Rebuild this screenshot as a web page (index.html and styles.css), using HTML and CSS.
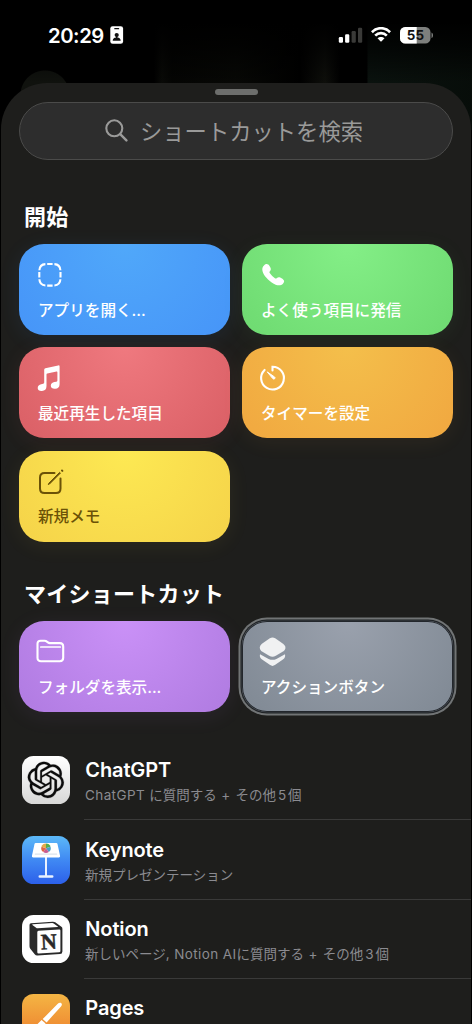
FILE: index.html
```html
<!DOCTYPE html>
<html lang="ja">
<head>
<meta charset="utf-8">
<title>ショートカット</title>
<link rel="stylesheet" href="styles.css">
</head>
<body>
<div class="screen">
  <header class="status">
    <span class="time">20:29</span>
    <svg class="badge" width="14" height="18" viewBox="0 0 14 18"><rect x=".3" y=".2" width="12.8" height="17.6" rx="2.4" fill="#fff"/><rect x="4.2" y="2" width="5" height="1.3" rx=".6" fill="#111"/><circle cx="6.7" cy="9" r="2.1" fill="#111"/><path d="M6 10h1.4v1.5c2 .3 3.300 1.100 3.300 3.300H2.700c0-2.200 1.300-3 3.300-3.300z" fill="#111"/></svg>
    <span class="spacer"></span>
    <svg class="signal" width="25" height="17" viewBox="0 0 25 17"><g fill="#fff"><rect x=".8" y="10" width="4.200" height="5.700" rx="1.200"/><rect x="7.100" y="7.300" width="4.200" height="8.400" rx="1.200"/></g><g fill="#3a3a38"><rect x="13.600" y="4" width="4.200" height="11.700" rx="1.200"/><rect x="20" y=".7" width="4.200" height="15" rx="1.200"/></g></svg>
    <svg class="wifi" width="20" height="15" viewBox="0 0 20 15"><g fill="none" stroke="#fff" stroke-width="2.700"><path d="M.9 5.200C6-.1 14-.1 19.100 5.200"/><path d="M4.200 8.600c3.300-3.300 8.300-3.300 11.600 0"/></g><path d="M6.500 11.300c2-1.900 5-1.900 7 0L10.600 14.300q-.6.500-1.200 0z" fill="#fff"/></svg>
    <svg class="battery" width="34" height="17" viewBox="0 0 34 17"><defs><clipPath id="cell"><rect width="30.500" height="16.600" rx="5.200"/></clipPath></defs><g clip-path="url(#cell)"><rect width="31" height="17" fill="#7d7f7d"/><rect width="16.700" height="17" fill="#fff"/></g><path d="M31.500 5.500c2 .8 2 4.800 0 5.600z" fill="#7d7f7d"/><text class="level" x="15.500" y="13.200" text-anchor="middle">55</text></svg>
  </header>

  <main class="sheet">
    <div class="grabber"></div>
    <div class="search">
      <svg width="23" height="23" viewBox="0 0 23 23" fill="none" stroke="#9a9a99" stroke-width="2.100" stroke-linecap="round"><circle cx="9.300" cy="9.300" r="8"/><path d="M15.200 15.200l6.200 6.200" stroke-width="2.400"/></svg>
      <span>ショートカットを検索</span>
    </div>

    <h2 class="heading">開始</h2>
    <div class="grid">
      <div class="card blue">
        <svg class="icon" width="28" height="28" viewBox="0 0 28 28" fill="none" stroke="#fff" stroke-width="2.100"><path d="M2.400 9.300c.2-4 2.200-6 6-6.200M17.400 3.100c3.800.2 5.800 2.200 6 6.200M23.400 18.300c-.2 4-2.200 6-6 6.200M8.400 24.500c-3.800-.2-5.800-2.200-6-6.200M10.200 3h5.400M10.200 24.600h5.400M2.300 11.100v5.400M23.500 11.100v5.400"/></svg>
        <span>アプリを開く...</span>
      </div>
      <div class="card green">
        <svg class="icon" width="28" height="28" viewBox="0 0 28 28"><path d="M4 4.500C6.200 2.200 8.200 3 9.500 5c1.800 2.600 1.700 3.800.4 5.200-.7.800-.5 1.300 0 2 1.400 1.900 3.100 3.600 5 5 .7.500 1.300.600 2-.1 1.400-1.200 2.600-1.300 5.100.5 2.200 1.500 3 3.100 1 5.100-2.500 2.500-6.300 2.300-11.300-1.300C6.500 17.700 2.300 12.600 2.300 8.400c0-1.600.6-2.800 1.700-3.900z" fill="#fff"/></svg>
        <span>よく使う項目に発信</span>
      </div>
      <div class="card red">
        <svg class="icon" width="28" height="28" viewBox="0 0 28 28" fill="#fff"><path d="M7.200 5.700q0-1.200 1.200-1.500L21.200 1.400q1.400-.3 1.400 1v17.500c0 3.300-1.700 4.700-4.400 4.900-2.600.2-4.400-1-4.400-3 0-2.200 1.500-3.200 3.600-3.700l2-.4q1-.2 1-1.200V8.200q0-.8-.9-.6l-9.200 2q-.8.200-.8 1v11.300c0 3.300-1.700 4.800-4.500 5-2.600.2-4.300-1-4.300-3 0-2.200 1.500-3.200 3.500-3.700l2-.4q1-.2 1-1.200z"/></svg>
        <span>最近再生した項目</span>
      </div>
      <div class="card orange">
        <svg class="icon" width="28" height="28" viewBox="0 0 28 28" fill="none" stroke="#fff" stroke-width="2.100" stroke-linecap="round"><path d="M13.500 6.500V2.700A11.400 11.400 0 1 1 5.600 5.900"/><path d="M8.500 8.100l7.100 4.900c1.300 1.100-.5 3-1.700 1.700z" fill="#fff" stroke-width="1"/></svg>
        <span>タイマーを設定</span>
      </div>
      <div class="card yellow">
        <svg class="icon" width="28" height="28" viewBox="0 0 28 28" fill="none" stroke="#6b5207" stroke-width="2" stroke-linecap="round"><path d="M17.500 5H7.500Q3 5 3 9.500v11Q3 25 7.500 25h11.500q4.500 0 4.500-4.500V10.400"/><path d="M23.200 5.300L12.500 16l-1.200.6.500-1.300L22.400 4.600z" fill="#6b5207" stroke-width="1"/><path d="M25 2.500l.4.400"/></svg>
        <span>新規メモ</span>
      </div>
    </div>

    <h2 class="heading mine">マイショートカット</h2>
    <div class="grid">
      <div class="card purple">
        <svg class="icon" width="30" height="28" viewBox="0 0 30 28" fill="none" stroke="#fff" stroke-width="2.100" stroke-linecap="round"><path d="M1.500 5.800Q1.500 2.700 4.600 2.700h4q1.300 0 2.300.9l1 .8q.8.700 2 .7h10q3.300 0 3.300 3.500v11.200q0 3.400-3.300 3.400H5q-3.500 0-3.500-3.500z"/><path d="M4.800 9h19.500" stroke-width="1.700"/></svg>
        <span>フォルダを表示...</span>
      </div>
      <div class="card gray">
        <svg class="icon" width="28" height="30" viewBox="0 0 28 30" fill="#f0f1f2"><path d="M1 16.300l8.600 4.600q3.900 1.900 7.800 0l8.600-4.600q.8 3.500-2.100 5.100l-8 5.700q-2.400 1.600-4.800 0l-8-5.700Q.2 19.800 1 16.300z"/><path d="M2.600 6L10.800.3q2.700-1.700 5.400 0l8.200 5.700q3.300 2.700 1.300 6l-.9 1-8 4.800q-3.300 1.900-6.600 0l-8-4.800Q-.9 9.500 2.600 6z"/></svg>
        <span>アクションボタン</span>
      </div>
    </div>

    <div class="apps">
      <div class="row">
        <svg class="app" width="48" height="48" viewBox="0 0 48 48"><defs><linearGradient id="g1" x2="0" y2="1"><stop stop-color="#fff"/><stop offset="1" stop-color="#d8d8d7"/></linearGradient></defs><rect width="48" height="48" rx="11.500" fill="url(#g1)"/><g transform="translate(5.700 5.700) scale(1.510)" fill="#0c0c0c" stroke="#0c0c0c" stroke-width=".15"><path d="M22.2819 9.8211a5.9847 5.9847 0 0 0-.5157-4.9108 6.0462 6.0462 0 0 0-6.5098-2.9A6.0651 6.0651 0 0 0 4.9807 4.1818a5.9847 5.9847 0 0 0-3.9977 2.9 6.0462 6.0462 0 0 0 .7427 7.0966 5.98 5.98 0 0 0 .511 4.9107 6.051 6.051 0 0 0 6.5146 2.9001A5.9847 5.9847 0 0 0 13.2599 24a6.0557 6.0557 0 0 0 5.7718-4.2058 5.9894 5.9894 0 0 0 3.9977-2.9001 6.0557 6.0557 0 0 0-.7475-7.0729zm-9.022 12.6081a4.4755 4.4755 0 0 1-2.8764-1.0408l.1419-.0804 4.7783-2.7582a.7948.7948 0 0 0 .3927-.6813v-6.7369l2.02 1.1686a.071.071 0 0 1 .038.052v5.5826a4.504 4.504 0 0 1-4.4945 4.4944zm-9.6607-4.1254a4.4708 4.4708 0 0 1-.5346-3.0137l.142.0852 4.783 2.7582a.7712.7712 0 0 0 .7806 0l5.8428-3.3685v2.3324a.0804.0804 0 0 1-.0332.0615L9.74 19.9502a4.4992 4.4992 0 0 1-6.1408-1.6464zM2.3408 7.8956a4.485 4.485 0 0 1 2.3655-1.9728V11.6a.7664.7664 0 0 0 .3879.6765l5.8144 3.3543-2.0201 1.1685a.0757.0757 0 0 1-.071 0l-4.8303-2.7865A4.504 4.504 0 0 1 2.3408 7.872zm16.5963 3.8558L13.1038 8.364 15.1192 7.2a.0757.0757 0 0 1 .071 0l4.8303 2.7913a4.4944 4.4944 0 0 1-.6765 8.1042v-5.6772a.79.79 0 0 0-.407-.667zm2.0107-3.0231l-.142-.0852-4.7735-2.7818a.7759.7759 0 0 0-.7854 0L9.409 9.2297V6.8974a.0662.0662 0 0 1 .0284-.0615l4.8303-2.7866a4.4992 4.4992 0 0 1 6.6802 4.66zM8.3065 12.863l-2.02-1.1638a.0804.0804 0 0 1-.038-.0567V6.0742a4.4992 4.4992 0 0 1 7.3757-3.4537l-.142.0805L8.704 5.459a.7948.7948 0 0 0-.3927.6813zm1.0976-2.3654l2.602-1.4998 2.6069 1.4998v2.9994l-2.5974 1.4997-2.6067-1.4997Z"/></g></svg>
        <div class="text"><b>ChatGPT</b><small><i class="latin">ChatGPT </i>に質問する<i class="plus"> + </i>その他<i class="count">5</i>個</small></div>
      </div>
      <div class="row">
        <svg class="app" width="48" height="48" viewBox="0 0 48 48"><defs><linearGradient id="g2" x2="0" y2="1"><stop stop-color="#5cb9f8"/><stop offset=".5" stop-color="#4089f3"/><stop offset="1" stop-color="#2c60ea"/></linearGradient></defs><rect width="48" height="48" rx="11.500" fill="url(#g2)"/><path d="M23 21h2v18.200h5.200q1.300 0 1.300 1.300t-1.300 1.300H17.800q-1.300 0-1.300-1.300t1.300-1.300H23z" fill="#e9f2ff"/><path d="M13.700 6.900h20.600q1 0 1.200 1l2.600 12.200q.2 1.400-1.200 1.400H11.100q-1.400 0-1.200-1.400L12.500 7.900q.2-1 1.200-1z" fill="#fff"/><path d="M13 17.500h22l.3 1.300H12.700z" fill="#dbe3ec"/><g transform="translate(24 12.200)"><path d="M0 0V-4.700A4.700 4.700 0 0 1 4.500-1.500z" fill="#55ad4f"/><path d="M0 0L4.500-1.500A4.700 4.700 0 0 1 2.800 3.800z" fill="#499fc5"/><path d="M0 0L2.800 3.800A4.700 4.700 0 0 1-2.800 3.800z" fill="#c65a91"/><path d="M0 0L-2.800 3.800A4.700 4.700 0 0 1-4.500-1.500z" fill="#df6545"/><path d="M0 0L-4.500-1.500A4.700 4.700 0 0 1 0-4.700z" fill="#e5aa4a"/></g></svg>
        <div class="text"><b>Keynote</b><small>新規プレゼンテーション</small></div>
      </div>
      <div class="row">
        <svg class="app" width="48" height="48" viewBox="0 0 48 48"><rect width="48" height="48" rx="11.500" fill="#fff"/><path d="M9 8.300l21.600-1.600q1.600-.1 2.600.6l6.200 4.500q1 .7 1 2v22.600q0 2.500-2.400 2.700l-22.600 1.300q-1.700.1-2.700-1.200L8.500 34q-1-1.400-1-2.800V10q0-1.500 1.500-1.700z" fill="#292929"/><path d="M11 9.300l19-1.300q1-.1 1.700.4l4.100 3q.6.500-.3.600l-19.700 1.200q-1 .1-1.700-.5l-3.700-2.600q-.7-.6.600-.8z" fill="#fff"/><path d="M16.500 15.700l20.700-1.200q1.200-.1 1.200 1.100v20.300q0 1.300-1.300 1.400l-20.300 1.200q-1.500.1-1.500-1.300V17.100q0-1.300 1.200-1.400z" fill="#fff"/><text class="notion-n" x="26.800" y="34.200" text-anchor="middle" transform="rotate(-3 27 27)">N</text></svg>
        <div class="text"><b>Notion</b><small>新しいページ<i class="latin">, Notion AI</i>に質問する<i class="plus"> + </i>その他<i class="count">3</i>個</small></div>
      </div>
      <div class="row">
        <svg class="app" width="48" height="48" viewBox="0 0 48 48"><defs><linearGradient id="g3" x2="0" y2="1"><stop stop-color="#f4b544"/><stop offset="1" stop-color="#ed7b2b"/></linearGradient></defs><rect width="48" height="48" rx="11.500" fill="url(#g3)"/><path d="M39.300 9.300c1 1 .6 1.900-.3 3.100L24.600 28.400l-3.900-3.300L35.500 10.100c1.300-1.300 2.800-1.700 3.800-.8zM19.600 26.100l4 3.500-7 7.400-4.700-3.500z" fill="#fff"/></svg>
        <div class="text"><b>Pages</b></div>
      </div>
    </div>
  </main>
</div>
</body>
</html>
```
FILE: styles.css
```css
* { box-sizing: border-box; }
body { margin: 0; background: #000; color: #fff; font-family: Inter, "Noto Sans CJK JP", sans-serif; }
.screen {
  width: 472px; height: 1024px; overflow: hidden;
  background:
    radial-gradient(circle at 45px 95px, #10120e 24px, transparent 25px),
    linear-gradient(90deg, transparent 154px, rgba(26,28,20,.35) 162px, rgba(14,15,10,.3) 172px, rgba(18,20,13,.4) 236px, transparent 300px, rgba(28,30,22,.5) 325px, transparent 340px, transparent 367px, rgba(16,28,22,.65) 368px, rgba(12,22,16,.6)) 0 20px / 100% 110px no-repeat,
    #000;
}
.status { height: 83px; display: flex; align-items: flex-start; padding: 0 40px 0 48px; background: linear-gradient(#000 22px, rgba(0,0,0,.7) 45px, transparent); }
.time { font-size: 20.300px; font-weight: 600; line-height: 26px; margin-top: 23px; width: 57px; letter-spacing: -.45px; white-space: nowrap; }
.badge { margin: 26px 0 0 4.500px; }
.spacer { flex: 1; }
.signal { margin: 27px 8px 0 0; }
.wifi { margin: 27px 9px 0 0; }
.battery { margin: 26.700px -2px 0 0; }
.level { font: 700 13.400px Inter, sans-serif; letter-spacing: .3px; fill: #111; }

.sheet { height: 941px; margin: 0 1px; padding: 6px 18px 0; border-radius: 46px 46px 0 0; background: #1e1e1c; overflow: hidden; }
.grabber { width: 43px; height: 6px; border-radius: 3px; margin: 0 auto 7px; background: #6d6e6c; }
.search { height: 58px; border-radius: 29px; border: 1px solid #4b4b4a; background: #2d2d2d; display: flex; align-items: center; justify-content: center; gap: 12px; color: #9a9a99; font-size: 22.300px; padding: 0 4px 2px 0; }
.heading { margin: 42px 5px 12px; height: 30px; font-size: 22px; font-weight: 600; line-height: 30px; letter-spacing: .15px; }
.mine { margin: 37px 5px 12.500px; letter-spacing: .25px; }
.grid { display: grid; grid-template-columns: 211px 211px; grid-auto-rows: 91px; gap: 12.300px 11px; justify-content: space-between; }
.card { border-radius: 25px; padding: 17px 0 0 18px; font-size: 15.600px; line-height: 22px; font-weight: 500; display: flex; flex-direction: column; }
.icon { display: block; flex: none; overflow: visible; }
.card span { white-space: nowrap; margin-top: auto; margin-bottom: 13.300px; padding-left: 1px; }
.blue { background: radial-gradient(circle at 50% 0, #50a8fa, #4796f8 130px); box-shadow: 0 4px 22px rgba(70,150,250,.09); }
.green { background: radial-gradient(circle at 50% 0, #84ef87, #70dc73 125px); box-shadow: 0 4px 22px rgba(110,220,115,.07); }
.red { background: radial-gradient(circle at 50% 0, #ef797f, #dc6268 125px); box-shadow: 0 4px 22px rgba(220,98,105,.09); }
.orange { background: radial-gradient(circle at 50% 0, #f4bf4b, #f1aa41 125px); box-shadow: 0 4px 22px rgba(241,170,65,.07); }
.yellow { background: radial-gradient(circle at 50% 0, #fde953, #f6d54a 125px); box-shadow: 0 4px 22px rgba(246,213,74,.07); color: #6b5207; }
.purple { background: radial-gradient(circle at 50% 0, #ca91f7, #b27de3 125px); box-shadow: 0 4px 22px rgba(178,125,227,.09); }
.purple .icon { margin-left: -1px; }
.gray { background: radial-gradient(circle at 50% 0, #9aa1ad, #828b96 125px); box-shadow: inset 0 0 0 1px #23272c, 0 0 0 .5px #3b3f44, 0 0 0 1.500px #1f2225, 0 0 0 3.500px #717475; }
.orange .icon, .gray .icon { margin-left: -1px; }

.apps { margin: 44.300px -19px 0 2.500px; }
.row { height: 79.200px; display: flex; }
.app { flex: none; display: block; }
.text { flex: 1; margin-left: 14.500px; height: 64px; border-bottom: 1px solid #3a3a39; }
.text b { display: block; height: 27px; line-height: 29px; font-size: 20px; font-weight: 600; padding-left: 1.300px; letter-spacing: -.12px; }
.text small { display: block; height: 24px; line-height: 24px; font-size: 13.500px; color: #8b8b90; padding-left: 1px; white-space: nowrap; }
.text i { font-style: normal; white-space: pre; }
.latin { letter-spacing: .4px; }
.plus { letter-spacing: .7px; }
.count { padding: 0 2px; }
.notion-n { font: 700 22px "Liberation Serif", serif; fill: #292929; stroke: #292929; stroke-width: .5px; }
```
